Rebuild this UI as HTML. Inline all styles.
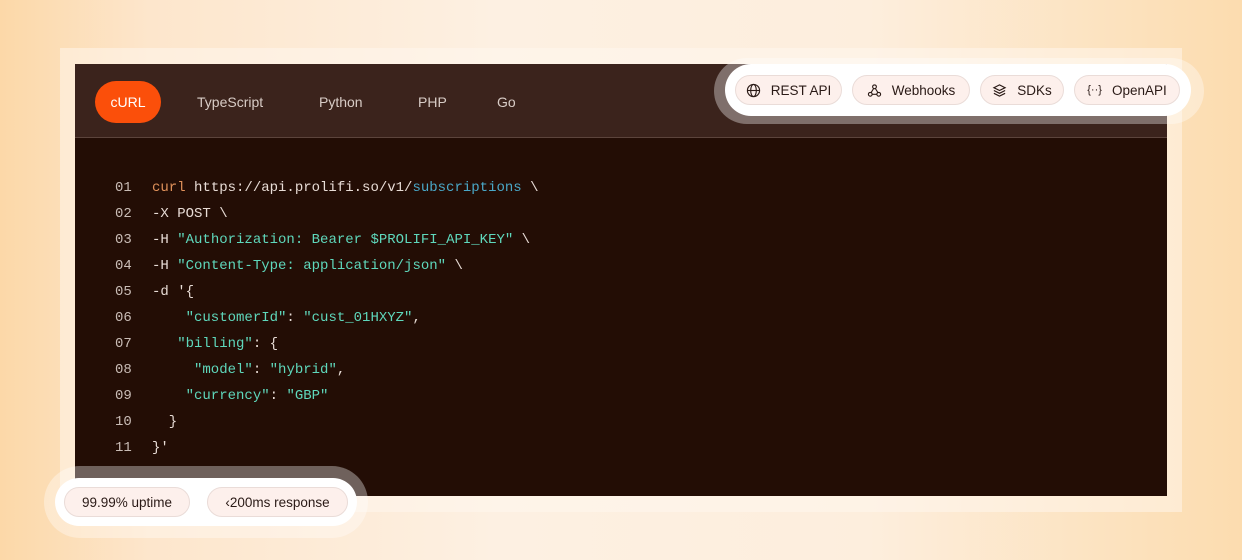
<!DOCTYPE html>
<html><head><style>
*{margin:0;padding:0;box-sizing:border-box}
body{width:1242px;height:560px;overflow:hidden;position:relative;font-family:"Liberation Sans",sans-serif;
background:linear-gradient(90deg,#fcd8a8 0%,#fde6cc 12%,#fdf0e2 40%,#fdeedd 70%,#fcdcaf 100%);}
.frame{position:absolute;left:60px;top:48px;width:1122px;height:464px;background:rgba(255,248,240,0.5)}
.panel{position:absolute;left:75px;top:64px;width:1092px;height:432px;background:#230d05;overflow:hidden}
.head{position:absolute;left:0;top:0;width:100%;height:74px;background:#3b231c;border-bottom:1px solid #5c443c}
.tab{position:absolute;top:38px;transform:translateY(-50%);color:#d8ccc6;font-size:14px}
.active{left:20px;width:66px;height:42px;top:17px;transform:none;border-radius:21px;background:#fb4f0a;color:#fff;text-align:center;line-height:42px}
.code{position:absolute;left:40px;top:111px;font-family:"Liberation Mono",monospace;font-size:14px;line-height:26px;color:#5fd8bc;white-space:pre}
.n{color:#c9bcb6;display:inline-block;width:37px}
.w{color:#e8dcd6}.o{color:#e0915a}.b{color:#4aa8c8}
.halo{position:absolute;border-radius:40px;background:rgba(255,255,255,0.3)}
.box{position:absolute;background:#fff;border-radius:30px}
.pill{position:absolute;height:30px;border-radius:15px;background:#fdf0ec;border:1px solid #eadcd8;font-size:13.5px;color:#2a1a16;display:flex;align-items:center;justify-content:center;gap:10px}
svg{display:block}
</style></head><body>
<div class="frame"></div>
<div class="panel">
 <div class="head">
  <div class="tab active">cURL</div>
  <div class="tab" style="left:122px">TypeScript</div>
  <div class="tab" style="left:244px">Python</div>
  <div class="tab" style="left:343px">PHP</div>
  <div class="tab" style="left:422px">Go</div>
 </div>
 <div class="code"><span class="n">01</span><span class="o">curl</span><span class="w"> https://api.prolifi.so/v1/</span><span class="b">subscriptions</span><span class="w"> \</span>
<span class="n">02</span><span class="w">-X POST \</span>
<span class="n">03</span><span class="w">-H </span>"Authorization: Bearer $PROLIFI_API_KEY"<span class="w"> \</span>
<span class="n">04</span><span class="w">-H </span>"Content-Type: application/json"<span class="w"> \</span>
<span class="n">05</span><span class="w">-d '{</span>
<span class="n">06</span>    "customerId"<span class="w">: </span>"cust_01HXYZ"<span class="w">,</span>
<span class="n">07</span>   "billing"<span class="w">: {</span>
<span class="n">08</span>     "model"<span class="w">: </span>"hybrid"<span class="w">,</span>
<span class="n">09</span>    "currency"<span class="w">: </span>"GBP"
<span class="n">10</span><span class="w">  }</span>
<span class="n">11</span><span class="w">}'</span></div>
</div>
<div class="halo" style="left:714px;top:58px;width:490px;height:66px;background:rgba(255,255,255,0.35)"></div>
<div class="box" style="left:725px;top:64px;width:466px;height:52px"></div>
<div class="pill" style="left:735px;top:75px;width:107px"><svg width="15" height="15" viewBox="0 0 16 16" fill="none" stroke="#2a1a16" stroke-width="1.2"><circle cx="8" cy="8" r="6.5"/><ellipse cx="8" cy="8" rx="3" ry="6.5"/><path d="M1.5 8h13"/></svg>REST API</div>
<div class="pill" style="left:852px;top:75px;width:118px"><svg width="15" height="15" viewBox="0 0 16 16" fill="none" stroke="#2a1a16" stroke-width="1.2"><circle cx="8" cy="4" r="2"/><circle cx="3.5" cy="12" r="2"/><circle cx="12.5" cy="12" r="2"/><path d="M7 6L4.5 10M9 6l2.5 4M5.5 12h5"/></svg>Webhooks</div>
<div class="pill" style="left:980px;top:75px;width:84px"><svg width="15" height="15" viewBox="0 0 16 16" fill="none" stroke="#2a1a16" stroke-width="1.2"><path d="M8 2l6 3-6 3-6-3z"/><path d="M2 8l6 3 6-3M2 11l6 3 6-3"/></svg>SDKs</div>
<div class="pill" style="left:1074px;top:75px;width:106px"><span style="font-size:11px">{··}</span>OpenAPI</div>
<div class="halo" style="left:44px;top:466px;width:324px;height:72px;background:rgba(255,255,255,0.35)"></div>
<div class="box" style="left:55px;top:478px;width:302px;height:48px;border-radius:24px"></div>
<div class="pill" style="left:64px;top:487px;width:126px">99.99% uptime</div>
<div class="pill" style="left:207px;top:487px;width:141px">‹200ms response</div>
</body></html>
